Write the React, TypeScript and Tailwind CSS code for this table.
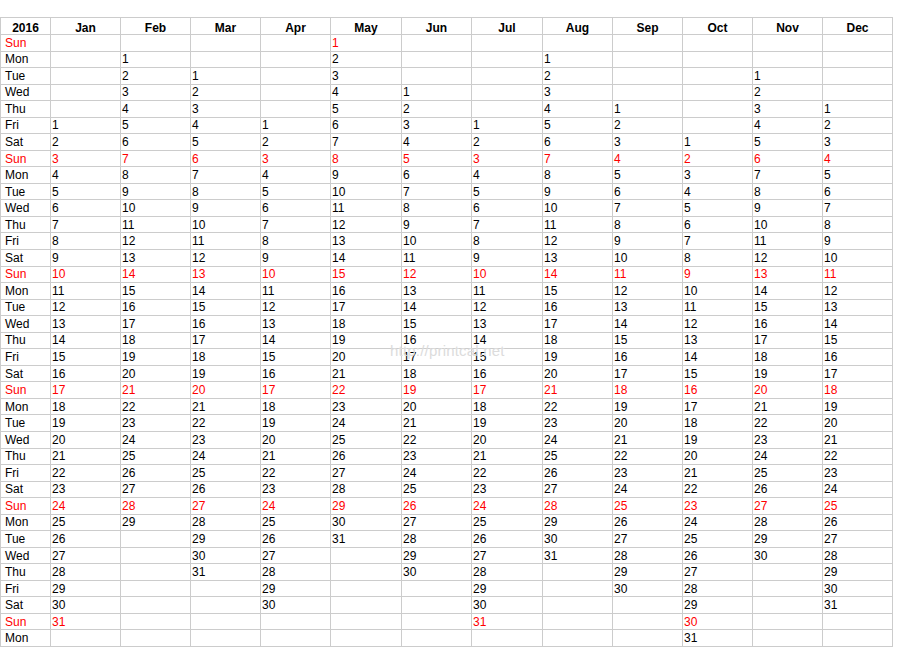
const MONTHS = ["Jan", "Feb", "Mar", "Apr", "May", "Jun", "Jul", "Aug", "Sep", "Oct", "Nov", "Dec"];
const DAYS = ["Sun", "Mon", "Tue", "Wed", "Thu", "Fri", "Sat"];
const YEAR = 2016;
const ROWS = 37;

// first weekday and length of each month
const months = MONTHS.map((name, m) => ({
  name,
  first: new Date(YEAR, m, 1).getDay(),
  len: new Date(YEAR, m + 1, 0).getDate(),
}));

function dayAt(m: number, row: number) {
  const d = row - months[m].first + 1;
  return d >= 1 && d <= months[m].len ? d : null;
}

export default function App() {
  const rows = Array.from({ length: ROWS }, (_, r) => r);
  return (
    <div className="relative h-[650px] w-[900px] bg-white pt-[17px] font-['Liberation_Sans',Arial,sans-serif] text-[12px] text-black">
      <div className="grid h-[630px] w-[893px] grid-cols-[49px_69px_69px_69px_69px_70px_69px_70px_69px_69px_69px_69px_69px] grid-rows-[16px_repeat(37,minmax(0,1fr))] gap-px bg-[#cccccc] p-px">
        <div className="flex items-center justify-center bg-white pt-[3px] font-bold leading-none">{YEAR}</div>
        {months.map((mo) => (
          <div key={mo.name} className="flex items-center justify-center bg-white pt-[3px] font-bold leading-none">
            {mo.name}
          </div>
        ))}
        {rows.map((r) => {
          const sun = r % 7 === 0;
          const color = sun ? "text-[#ff0000]" : "text-black";
          return [
            <div key={`d${r}`} className={`flex items-center bg-white pl-[4px] leading-none ${color}`}>
              {DAYS[r % 7]}
            </div>,
            ...months.map((mo, m) => (
              <div key={`${mo.name}${r}`} className={`flex items-center bg-white pl-[1px] leading-none ${color}`}>
                {dayAt(m, r)}
              </div>
            )),
          ];
        })}
      </div>
      <div className="pointer-events-none absolute left-[390px] top-[340px] text-[15px] tracking-[0.2px] text-[#dcdcdc]">
        http://printcal.net
      </div>
    </div>
  );
}
